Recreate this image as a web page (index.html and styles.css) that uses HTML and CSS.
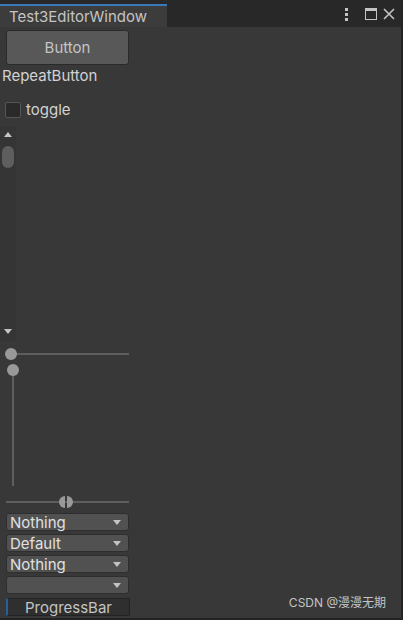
FILE: index.html
```html
<!DOCTYPE html>
<html>
<head>
<meta charset="utf-8">
<title>Test3EditorWindow</title>
<link rel="stylesheet" href="styles.css">
</head>
<body>
<div class="win">
	<div class="tabbar">
		<div class="tab">Test3EditorWindow</div>
		<div class="tools">
			<svg class="kebab" width="4" height="13" viewBox="0 0 4 13"><rect x="0" y="0" width="3" height="3" fill="#c4c4c4"/><rect x="0" y="5" width="3" height="3" fill="#c4c4c4"/><rect x="0" y="10" width="3" height="3" fill="#c4c4c4"/></svg>
			<svg class="maxi" width="12" height="12" viewBox="0 0 12 12"><rect x="0.5" y="0.5" width="11" height="11" fill="none" stroke="#c4c4c4"/><rect x="0" y="0" width="12" height="3" fill="#c4c4c4"/></svg>
			<svg class="close" width="12" height="12" viewBox="0 0 12 12"><path d="M1 1 L11 11 M11 1 L1 11" stroke="#c4c4c4" stroke-width="1.6"/></svg>
		</div>
	</div>
	<div class="content">
		<div class="btn">Button</div>
		<div class="label">RepeatButton</div>
		<div class="toggle"><span class="box"></span>toggle</div>
		<div class="vscroll">
			<svg width="10" height="6" viewBox="0 0 10 6"><path d="M1 6 L5 1 L9 6Z" fill="#c4c4c4"/></svg>
			<div class="thumb"></div>
			<div class="grow"></div>
			<svg width="10" height="6" viewBox="0 0 10 6"><path d="M1 0 L9 0 L5 5Z" fill="#c4c4c4"/></svg>
		</div>
		<div class="hslider"><span class="knob"></span></div>
		<div class="vslider"><span class="knob"></span></div>
		<div class="mmslider"><span class="half l"></span><span class="half r"></span></div>
		<div class="drops">
			<div class="drop">Nothing</div>
			<div class="drop">Default</div>
			<div class="drop">Nothing</div>
			<div class="drop"></div>
		</div>
		<div class="progress">ProgressBar</div>
		<div class="mark">CSDN @漫漫无期</div>
	</div>
</div>
</body>
</html>
```

FILE: styles.css
```css
body{
	margin:0;
	background:#232323;
	font-family:Inter, "Noto Sans CJK SC", sans-serif;
	color:#c4c4c4;
}
.win{
	width:401px;
	height:618px;
	display:flex;
	flex-direction:column;
}
.tabbar{
	height:27px;
	background:#282828;
	display:flex;
	align-items:flex-end;
}
.tab{
	width:158px;
	height:21px;
	padding-left:9px;
	background:#3c3c3c;
	border-top:2px solid #3a79bb;
	font-size:15px;
	line-height:21px;
	color:#c4c4c4;
}
.tools{
	margin-left:auto;
	display:flex;
	align-items:flex-start;
	padding-top:8px;
	height:19px;
	align-self:flex-start;
}
.kebab{
	margin-right:16px;
}
.maxi{
	margin-right:6px;
}
.close{
	margin-right:6px;
}
.content{
	flex:1;
	background:#383838;
	position:relative;
	padding-top:3px;
}
.btn{
	margin-left:6px;
	width:121px;
	height:33px;
	background:#585858;
	border:1px solid #2a2a2a;
	border-radius:3px;
	text-align:center;
	line-height:33px;
	font-size:15px;
	color:#c4c4c4;
}
.label{
	margin-left:2px;
	font-size:15px;
	line-height:20px;
	margin-top:1px;
	color:#d2d2d2;
}
.toggle{
	margin-top:16px;
	margin-left:5px;
	display:flex;
	align-items:center;
	gap:5px;
	font-size:15px;
	line-height:16px;
	color:#d2d2d2;
}
.box{
	width:14px;
	height:14px;
	background:#2a2a2a;
	border:1px solid #555;
	border-radius:2px;
}
.vscroll{
	margin-top:9px;
	width:16px;
	height:214px;
	background:#353535;
	display:flex;
	flex-direction:column;
	align-items:center;
	padding-top:4px;
	box-sizing:border-box;
}
.vscroll .thumb{
	width:12px;
	height:22px;
	margin-top:9px;
	border-radius:6px;
	background:#5e5e5e;
}
.vscroll .grow{
	flex:1;
}
.vscroll svg:last-child{
	margin-bottom:6px;
}
.hslider{
	margin:12px 0 0 6px;
	width:123px;
	height:2px;
	background:#5e5e5e;
	position:relative;
}
.hslider .knob, .vslider .knob{
	position:absolute;
	width:12px;
	height:12px;
	border-radius:50%;
	background:#999;
}
.hslider .knob{
	left:-1px;
	top:-5px;
}
.vslider{
	margin:15px 0 0 12px;
	width:2px;
	height:116px;
	background:#5e5e5e;
	position:relative;
}
.vslider .knob{
	left:-5px;
	top:-6px;
}
.mmslider{
	margin:15px 0 0 6px;
	width:123px;
	height:2px;
	background:#5e5e5e;
	position:relative;
}
.mmslider .half{
	position:absolute;
	top:-5px;
	width:6px;
	height:12px;
	background:#999;
}
.mmslider .l{
	left:53px;
	border-radius:6px 0 0 6px;
}
.mmslider .r{
	left:61px;
	border-radius:0 6px 6px 0;
}
.drops{
	margin:10px 0 0 6px;
	display:flex;
	flex-direction:column;
	gap:3px;
}
.drop{
	width:114px;
	height:16px;
	padding-left:3px;
	padding-right:4px;
	background:#515151;
	border:1px solid #2e2e2e;
	border-radius:3px;
	font-size:15px;
	line-height:17px;
	color:#e0e0e0;
	position:relative;
}
.drop::after{
	content:"";
	position:absolute;
	right:7px;
	top:6px;
	border-left:4px solid transparent;
	border-right:4px solid transparent;
	border-top:5px solid #c4c4c4;
}
.progress{
	margin:4px 0 0 6px;
	width:121px;
	height:16px;
	background:#2f2f2f;
	border:1px solid #232323;
	border-left:2px solid #2a5e98;
	box-sizing:content-box;
	text-align:center;
	font-size:15px;
	line-height:17px;
	color:#c4c4c4;
}
.mark{
	position:absolute;
	right:15px;
	bottom:8px;
	font-size:12px;
	color:#c4c4c4;
}
```
